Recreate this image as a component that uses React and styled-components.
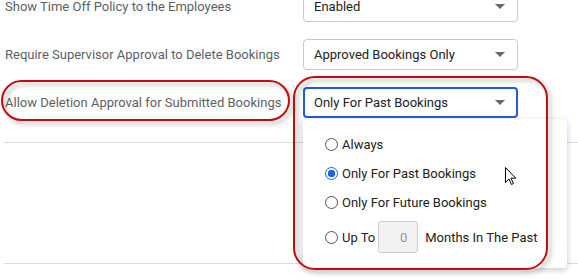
import React from 'react';
import styled, { createGlobalStyle } from 'styled-components';

const GlobalStyle = createGlobalStyle`
  body {
    margin: 0;
    background: #fff;
    font-family: Roboto, "Liberation Sans", sans-serif;
    overflow: hidden;
  }
`;

const Page = styled.div`
  position: relative;
  width: 578px;
  height: 279px;
  overflow: hidden;
`;

const Settings = styled.div`
  display: grid;
  grid-template-columns: 298px 215px;
  row-gap: 17px;
  align-items: center;
  margin-top: -9px;
  padding-left: 5px;
`;

const Label = styled.div`
  font-size: 13px;
  color: #5b5f66;
  white-space: nowrap;
`;

const Select = styled.div`
  box-sizing: border-box;
  height: 31px;
  display: flex;
  align-items: center;
  justify-content: space-between;
  padding: 0 ${p => (p.$focused ? 9 : 10)}px;
  border: ${p => (p.$focused ? '2px solid #1f5be6' : '1px solid #c9c9c9')};
  border-radius: 4px;
  font-size: 13px;
  color: #222;
`;

const Caret = styled.span`
  width: 0;
  height: 0;
  margin-right: 2px;
  border-left: 5px solid transparent;
  border-right: 5px solid transparent;
  border-top: 5px solid #666;
`;

const Divider = styled.div`
  margin-left: 4px;
  margin-top: ${p => p.$top}px;
  border-top: 1px solid #dcdcdc;
`;

const Menu = styled.div`
  position: absolute;
  left: 303px;
  top: 119px;
  width: 264px;
  height: 149px;
  box-sizing: border-box;
  padding: 15px 0 0 22px;
  background: #fff;
  border-radius: 4px;
  box-shadow: 0 2px 6px rgba(0, 0, 0, 0.22);
  display: flex;
  flex-direction: column;
  gap: 9px;
`;

const Option = styled.label`
  display: flex;
  align-items: center;
  height: ${p => (p.$tall ? 32 : 20)}px;
  font-size: 13px;
  color: #222;
  white-space: nowrap;
`;

const Radio = styled.span`
  box-sizing: border-box;
  width: 13px;
  height: 13px;
  margin-right: 4px;
  border-radius: 50%;
  border: 1px solid ${p => (p.$checked ? '#1a66e0' : '#555')};
  background: ${p => (p.$checked ? 'radial-gradient(circle, #1a66e0 0 3.5px, #fff 4px)' : '#fff')};
`;

const NumberBox = styled.div`
  box-sizing: border-box;
  width: 40px;
  height: 32px;
  margin: 0 7px 0 3px;
  padding-right: 10px;
  display: flex;
  align-items: center;
  justify-content: flex-end;
  background: #f2f2f2;
  border: 1px solid #ccc;
  border-radius: 3px;
  color: #999;
  font-size: 13px;
`;

const Annotation = styled.div`
  position: absolute;
  box-sizing: border-box;
  left: ${p => p.$x}px;
  top: ${p => p.$y}px;
  width: ${p => p.$w}px;
  height: ${p => p.$h}px;
  border: 2px solid #c30d0d;
  border-radius: ${p => p.$r}px;
  filter: drop-shadow(3px 3px 2px rgba(0, 0, 0, 0.3));
`;

const Cursor = styled.svg`
  position: absolute;
  left: 505px;
  top: 167px;
`;

const options = [
  { text: 'Always' },
  { text: 'Only For Past Bookings', checked: true },
  { text: 'Only For Future Bookings' },
];

export default function App() {
  return (
    <Page>
      <GlobalStyle />
      <Settings>
        <Label>Show Time Off Policy to the Employees</Label>
        <Select>
          Enabled
          <Caret />
        </Select>
        <Label>Require Supervisor Approval to Delete Bookings</Label>
        <Select>
          Approved Bookings Only
          <Caret />
        </Select>
        <Label>Allow Deletion Approval for Submitted Bookings</Label>
        <Select $focused>
          Only For Past Bookings
          <Caret />
        </Select>
      </Settings>
      <Divider $top={24} />
      <Divider $top={120} />

      <Menu>
        {options.map(o => (
          <Option key={o.text}>
            <Radio $checked={o.checked} />
            {o.text}
          </Option>
        ))}
        <Option $tall>
          <Radio />
          Up To
          <NumberBox>0</NumberBox>
          Months In The Past
        </Option>
      </Menu>

      <Annotation $x={1} $y={80} $w={289} $h={41} $r={21} />
      <Annotation $x={293} $y={76} $w={255} $h={194} $r={22} />

      <Cursor width="12" height="19" viewBox="0 0 12 19">
        <path
          d="M0.5 0.5 L0.5 15.5 L4 12 L6.5 17.5 L8.5 16.5 L6 11.2 L10.8 11.2 Z"
          fill="#fff"
          stroke="#000"
          strokeWidth="1"
          strokeLinejoin="round"
        />
      </Cursor>
    </Page>
  );
}
